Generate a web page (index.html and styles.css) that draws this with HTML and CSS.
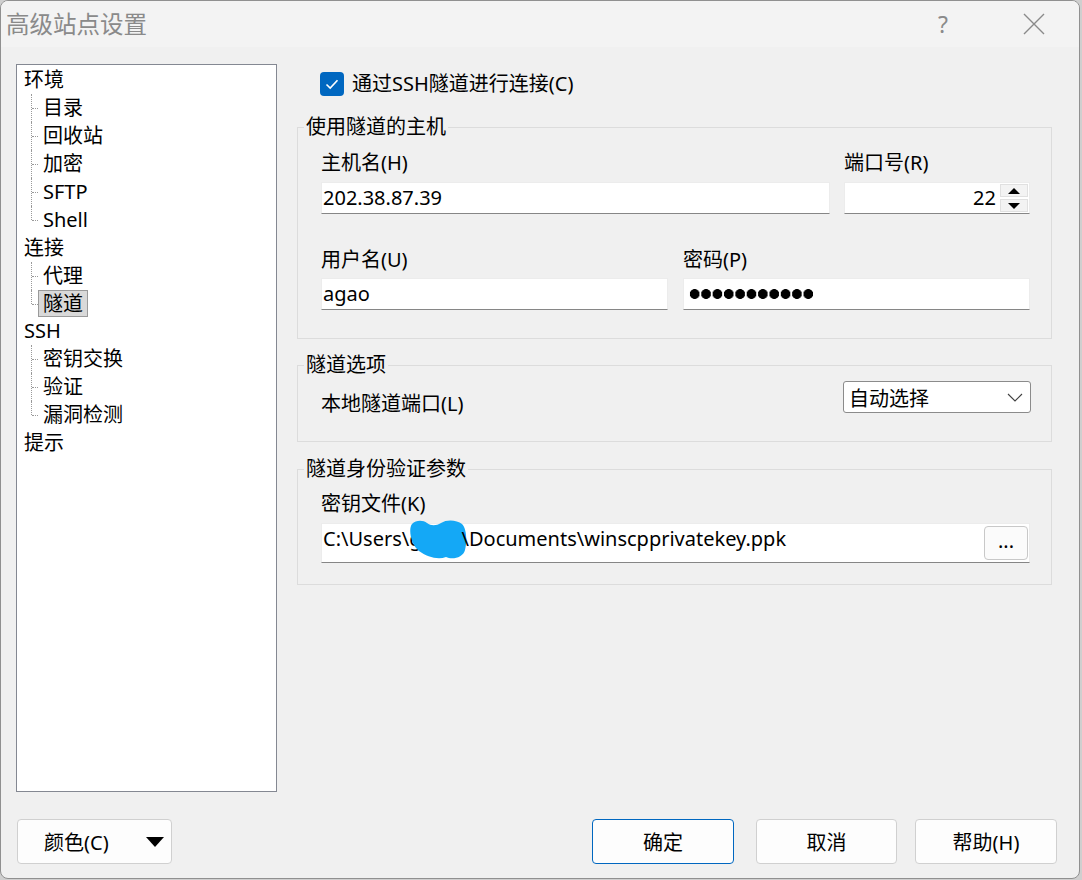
FILE: index.html
```html
<!DOCTYPE html>
<html lang="zh-CN">
<head>
  <meta charset="UTF-8" />
  <title>高级站点设置</title>
  <link rel="stylesheet" href="styles.css">
</head>
<body>

  <div class="window">
    <div class="titlebar">
      <span class="title">高级站点设置</span>
      <span class="help-btn">?</span>
      <span class="close-btn">
        <svg width="22" height="22" viewBox="0 0 22 22"><path d="M1 1 L21 21 M21 1 L1 21" stroke="#8a8a8a" stroke-width="1.4" fill="none"/></svg>
      </span>
    </div>

    <div class="main">
      <ul class="tree">
        <li><span class="node">环境</span>
          <ul class="sub">
            <li><span class="node">目录</span></li>
            <li><span class="node">回收站</span></li>
            <li><span class="node">加密</span></li>
            <li><span class="node">SFTP</span></li>
            <li><span class="node">Shell</span></li>
          </ul>
        </li>
        <li><span class="node">连接</span>
          <ul class="sub">
            <li><span class="node">代理</span></li>
            <li><span class="node selected">隧道</span></li>
          </ul>
        </li>
        <li><span class="node">SSH</span>
          <ul class="sub">
            <li><span class="node">密钥交换</span></li>
            <li><span class="node">验证</span></li>
            <li><span class="node">漏洞检测</span></li>
          </ul>
        </li>
        <li><span class="node">提示</span></li>
      </ul>

      <div class="panel">
        <div class="check-row">
          <span class="checkbox">
            <svg width="24" height="24" viewBox="0 0 24 24"><path d="M6.5 12.5 L10.2 16 L17.5 8.2" stroke="#fff" stroke-width="1.6" fill="none"/></svg>
          </span>
          <span>通过SSH隧道进行连接(C)</span>
        </div>

        <fieldset class="group">
          <legend>使用隧道的主机</legend>
          <div class="group-body host-body">
            <div class="host-grid">
              <div class="field">
                <span class="label">主机名(H)</span>
                <div class="input">202.38.87.39</div>
              </div>
              <div class="field">
                <span class="label">端口号(R)</span>
                <div class="input port">
                  <span class="num">22</span>
                  <span class="spin">
                    <span class="spin-btn"><span class="tri-up"></span></span>
                    <span class="spin-btn"><span class="tri-down"></span></span>
                  </span>
                </div>
              </div>
            </div>
            <div class="user-grid">
              <div class="field">
                <span class="label">用户名(U)</span>
                <div class="input">agao</div>
              </div>
              <div class="field">
                <span class="label">密码(P)</span>
                <div class="input"><span class="dots"></span></div>
              </div>
            </div>
          </div>
        </fieldset>

        <fieldset class="group group-opts">
          <legend>隧道选项</legend>
          <div class="group-body opts-body">
            <span class="label local-label">本地隧道端口(L)</span>
            <div class="select">
              <span>自动选择</span>
              <svg width="16" height="9" viewBox="0 0 16 9"><path d="M1 1 L8 8 L15 1" stroke="#404040" stroke-width="1.1" fill="none"/></svg>
            </div>
          </div>
        </fieldset>

        <fieldset class="group group-auth">
          <legend>隧道身份验证参数</legend>
          <div class="group-body auth-body">
            <span class="label">密钥文件(K)</span>
            <div class="input keyfile">
              <span class="path">C:\Users\g<svg class="blob" width="62" height="42" viewBox="0 0 62 42"><path d="M6 4 C10 0 17 0 21 3 C25 6 30 6 35 3 C41 -1 51 0 56 4 C61 9 61 22 59 30 C57 38 46 40 40 37 C32 40 21 37 13 31 C5 25 2 9 6 4 Z" fill="#14a8f6"/></svg>\Documents\winscpprivatekey.ppk</span>
              <span class="browse">...</span>
            </div>
          </div>
        </fieldset>
      </div>
    </div>

    <div class="footer">
      <div class="btn btn-color">
        <span>颜色(C)</span>
        <span class="tri-big"></span>
      </div>
      <div class="btn btn-ok">确定</div>
      <div class="btn btn-cancel">取消</div>
      <div class="btn btn-help">帮助(H)</div>
    </div>
  </div>

</body>
</html>
```

FILE: styles.css
```css
body {
  margin: 0;
  background-color: #cfcfcf;
}

.window {
  width: 1080px;
  height: 879px;
  box-sizing: border-box;
  border: 1px solid #909090;
  border-radius: 8px;
  background: #f0f0f0;
  overflow: hidden;
  font-family: "Noto Sans", "Noto Sans CJK SC", sans-serif;
  font-size: 20px;
  color: #000;
}

.titlebar {
  height: 46px;
  display: flex;
  align-items: center;
  background: #f3f3f3;
  padding: 0 22px 0 5px;
}

.title {
  flex: 1;
  font-size: 23.5px;
  color: #8a8a8a;
  line-height: 30px;
}

.help-btn {
  width: 46px;
  text-align: center;
  color: #8a8a8a;
  font-size: 23px;
  margin-right: 45px;
}

.close-btn {
  width: 46px;
  display: flex;
  justify-content: center;
}

.main {
  display: flex;
  gap: 20px;
  padding: 17px 27px 0 15px;
}

/* tree */
.tree {
  width: 261px;
  height: 728px;
  box-sizing: border-box;
  margin: 0;
  padding: 1px 0 0 7px;
  list-style: none;
  background: #fff;
  border: 1px solid #848892;
  line-height: 28px;
}

.node {
  display: block;
  width: fit-content;
  height: 28px;
  line-height: 28px;
}

.sub {
  list-style: none;
  margin: 0;
  padding: 0 0 0 14px;
}

.sub li {
  position: relative;
}

.sub li::before {
  content: "";
  position: absolute;
  left: -7px;
  top: 0;
  height: 100%;
  border-left: 1px dotted #9a9a9a;
}

.sub li:last-child::before {
  height: 14px;
}

.sub li::after {
  content: "";
  position: absolute;
  left: -6px;
  top: 14px;
  width: 6px;
  border-top: 1px dotted #9a9a9a;
}

.sub .node {
  padding: 0 4px;
  border: 1px solid transparent;
  box-sizing: border-box;
  line-height: 26px;
}

.sub .node.selected {
  background: #d9d9d9;
  border-color: #9a9a9a;
  height: 27px;
  line-height: 25px;
}

/* right panel */
.panel {
  width: 755px;
}

.check-row {
  display: flex;
  align-items: center;
  gap: 8px;
  height: 28px;
  margin-top: 6px;
  padding-left: 23px;
  line-height: 28px;
}

.checkbox {
  width: 24px;
  height: 24px;
  border-radius: 4px;
  background: #0067c0;
  display: flex;
}

.group {
  margin: 17px 0 0;
  padding: 0 0 0 6px;
  border: 1px solid #dcdcdc;
  min-width: 0;
}

.group legend {
  padding: 0 2px;
  line-height: 24px;
}

.group-opts {
  margin-top: 14px;
}

.group-auth {
  margin-top: 15px;
}

.group-body {
  padding: 12px 21px 28px 17px;
}

.label {
  display: block;
  line-height: 24px;
}

.field {
  display: flex;
  flex-direction: column;
  gap: 7px;
}

.host-grid {
  display: grid;
  grid-template-columns: 1fr 186px;
  column-gap: 14px;
}

.user-grid {
  display: grid;
  grid-template-columns: 1fr 1fr;
  column-gap: 15px;
  margin-top: 34px;
}

.user-grid .field {
  gap: 6px;
}

.input {
  height: 32px;
  box-sizing: border-box;
  background: #fff;
  border: 1px solid #ececec;
  border-bottom-color: #868686;
  padding-left: 1px;
  line-height: 30px;
  display: flex;
  align-items: center;
}

.port {
  padding-right: 1px;
}

.num {
  flex: 1;
  text-align: right;
  padding-right: 4px;
}

.spin {
  display: flex;
  flex-direction: column;
  gap: 2px;
  width: 28px;
}

.spin-btn {
  height: 13px;
  background: #f3f3f3;
  border: 1px solid #e0e0e0;
  box-sizing: border-box;
  display: flex;
  align-items: center;
  justify-content: center;
}

.tri-up,
.tri-down {
  width: 0;
  height: 0;
  border-left: 6px solid transparent;
  border-right: 6px solid transparent;
}

.tri-up {
  border-bottom: 6px solid #000;
}

.tri-down {
  border-top: 6px solid #000;
}

.dots {
  display: block;
  margin-left: 4px;
  width: 125px;
  height: 12px;
  background: radial-gradient(circle, #000 4.6px, transparent 5.2px) 0 0 / 11.36px 12px repeat-x;
}

.opts-body {
  display: flex;
  justify-content: space-between;
  align-items: flex-start;
  padding: 4px 20px 25px 17px;
}

.local-label {
  margin-top: 11px;
}

.select {
  width: 188px;
  height: 32px;
  box-sizing: border-box;
  background: #fff;
  border: 1px solid #8b8b8b;
  border-radius: 3px;
  display: flex;
  align-items: center;
  justify-content: space-between;
  padding: 0 7px 0 5px;
}

.auth-body {
  padding: 11px 21px 21px 17px;
  display: flex;
  flex-direction: column;
  gap: 7px;
}

.keyfile {
  height: 40px;
  padding-right: 1px;
}

.path {
  flex: 1;
  white-space: nowrap;
}

.blob {
  vertical-align: -16px;
  margin: -14px -6px 0 -16px;
}

.browse {
  width: 44px;
  height: 34px;
  box-sizing: border-box;
  border: 1px solid #c8c8c8;
  border-radius: 4px;
  background: #fbfbfb;
  text-align: center;
  line-height: 28px;
}

/* footer */
.footer {
  display: flex;
  padding: 27px 22px 0 16px;
}

.btn {
  height: 45px;
  box-sizing: border-box;
  border: 1px solid #d0d0d0;
  border-radius: 4px;
  background: #fdfdfd;
  display: flex;
  align-items: center;
  justify-content: center;
  width: 142px;
}

.btn-color {
  width: 155px;
  justify-content: space-between;
  padding: 0 7px 0 26px;
}

.tri-big {
  width: 0;
  height: 0;
  border-left: 9px solid transparent;
  border-right: 9px solid transparent;
  border-top: 10px solid #000;
}

.btn-ok {
  margin-left: auto;
  margin-right: 22px;
  border-color: #0067c0;
}

.btn-cancel {
  width: 141px;
  margin-right: 18px;
}
```
